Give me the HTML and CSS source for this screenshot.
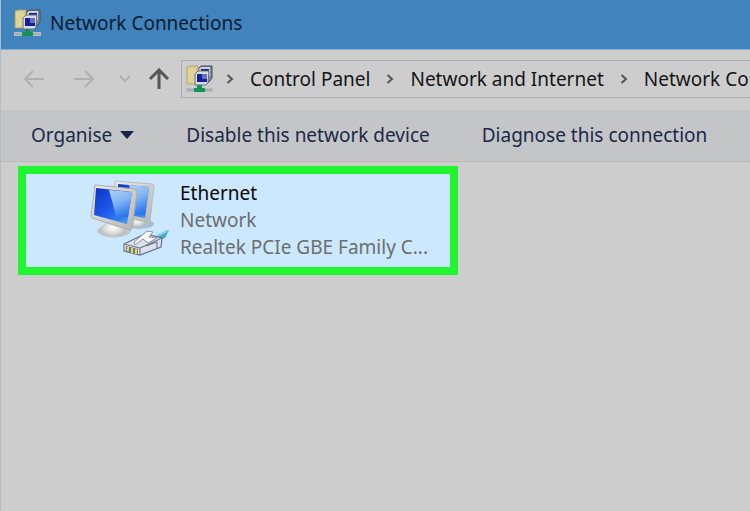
FILE: index.html
```html
<!DOCTYPE html>
<html lang="en-GB">
<head>
<meta charset="utf-8">
<title>Network Connections</title>
<link rel="stylesheet" href="styles.css">
</head>
<body>
<svg class="defs" aria-hidden="true">
  <symbol id="net-folder" viewBox="0 0 28 28">
    <path d="M1 2l3-1h8v18H1z" fill="#d5c98a" stroke="#a99c62" stroke-width=".7"/>
    <path d="M2 3h8v15H2z" fill="#dfd495"/>
    <path d="M13 3l2-2h11v12l-3 4H13z" fill="#85898d" stroke="#424b55"/>
    <path d="M13 4l2-2h9v9H13z" fill="#cdd2df"/>
    <path d="M15 4h8v7h-8z" fill="#16208e"/>
    <path d="M9 9l3-3h11l-1 12-2 2H9z" fill="#d8dbe4" stroke="#687083"/>
    <path d="M11 9h10v8H11z" fill="#172098"/>
    <path d="M16 9h5v5h-5z" fill="#6070bd"/>
    <path d="M0 23h27v4H0z" fill="#b6bec0"/>
    <path d="M1 25h25" stroke="#959da0"/>
    <path d="M11 20h5v3h3v4H8v-4h3z" fill="#159257"/>
  </symbol>
  <symbol id="crumb-arrow" viewBox="0 0 8 10">
    <path d="M1.5 1l4.5 4-4.5 4" fill="none" stroke="#555" stroke-width="2"/>
  </symbol>
</svg>
<div class="window">
  <header class="titlebar">
    <svg class="folder" aria-hidden="true"><use href="#net-folder"/></svg>
    <h1>Network Connections</h1>
  </header>
  <nav class="navbar" aria-label="Navigation">
    <button class="nav" aria-label="Back" disabled><svg width="22" height="20" viewBox="0 0 22 20"><path d="M21 10H2M10 2l-8 8 8 8"/></svg></button>
    <button class="nav forward" aria-label="Forward" disabled><svg width="22" height="20" viewBox="0 0 22 20"><path d="M1 10h19M12 2l8 8-8 8"/></svg></button>
    <button class="nav recent" aria-label="Recent locations" disabled><svg width="12" height="8" viewBox="0 0 12 8"><path d="M1 1l5 5 5-5"/></svg></button>
    <button class="nav up" aria-label="Up"><svg width="20" height="22" viewBox="0 0 20 22"><path d="M10 21V2M1 11l9-9 9 9"/></svg></button>
    <div class="address">
      <svg class="folder" aria-hidden="true"><use href="#net-folder"/></svg>
      <svg class="arrow" aria-hidden="true"><use href="#crumb-arrow"/></svg>
      <a href="#">Control Panel</a>
      <svg class="arrow" aria-hidden="true"><use href="#crumb-arrow"/></svg>
      <a href="#">Network and Internet</a>
      <svg class="arrow" aria-hidden="true"><use href="#crumb-arrow"/></svg>
      <a href="#">Network Connections</a>
    </div>
  </nav>
  <div class="commands">
    <button class="organise">Organise <svg width="14" height="8" viewBox="0 0 14 8" aria-hidden="true"><path d="M0 0h14L7 8z" fill="#14244a"/></svg></button>
    <button>Disable this network device</button>
    <button>Diagnose this connection</button>
  </div>
  <main>
    <button class="adapter">
      <svg width="82" height="80" viewBox="0 0 82 80" aria-hidden="true">
        <defs>
          <linearGradient id="screen" x1="0" y1="0" x2="1" y2="1"><stop stop-color="#0934c4"/><stop offset=".5" stop-color="#1e5ced"/><stop offset="1" stop-color="#42a5fb"/></linearGradient>
          <linearGradient id="glare" x1="0" y1="0" x2=".3" y2="1"><stop stop-color="#b4d4f4"/><stop offset=".5" stop-color="#7fb3f2"/><stop offset="1" stop-color="#2c76ec"/></linearGradient>
          <linearGradient id="bezel" x2="1" y2="1"><stop stop-color="#f0eee9"/><stop offset="1" stop-color="#b4b3b2"/></linearGradient>
          <radialGradient id="base"><stop stop-color="#fff"/><stop offset=".6" stop-color="#ddddda"/><stop offset="1" stop-color="#b9bcbc"/></radialGradient>
        </defs>
        <g transform="translate(-1 -3)">
          <ellipse cx="50" cy="47" rx="15" ry="5" fill="#a9bfd0"/>
          <path d="M43 37l11 3 1 4c5 2 1 6-6 6l-10-3z" fill="url(#base)"/>
          <path d="M26 4l37 3 2 2-4 35-3 1-33-6z" fill="url(#bezel)" stroke="#b6bcc0"/>
          <path d="M29 7l31 3-4 31-26-5z" fill="url(#screen)"/>
          <path d="M40 8l20 2-4 29-10-3z" fill="url(#glare)"/>
          <ellipse cx="25" cy="54" rx="17" ry="6" fill="#b9cbd7"/>
          <path d="M18 41l17 5-2 4c9 4 4 10-8 10-14 0-19-7-10-12 5-2 4-4 3-7z" fill="url(#base)" stroke="#c5c9c9"/>
          <path d="M6 8l40 4 2 3-5 37-3 1L3 41l-1-2z" fill="url(#bezel)" stroke="#aaaead"/>
          <path d="M7 11l36 4-5 32-33-9z" fill="url(#screen)"/>
          <path d="M20 13l23 2-4 25-11 2z" fill="url(#glare)"/>
        </g>
        <g transform="translate(-1 -1)">
          <path d="M63 60l7-5 10-4-4 8-9 4z" fill="#3da9cc"/>
          <path d="M68 57l10-5" stroke="#8bd5e3" stroke-width="2"/>
          <path d="M35 65l21-10 17 4-1 9-21 8-16-4z" fill="#dce1ec" stroke="#65728a" stroke-width="1.2"/>
          <path d="M35 65l16 4 22-10M51 69v7M57 67l11-4v6" fill="none" stroke="#747e91" stroke-width="1.2"/>
          <path d="M45 63l13-11 6 1-4 5 8 1-9 5-5-4-8 6z" fill="#f7f9fc" stroke="#8793a6"/>
          <path d="M37 67l12 3v5l-12-3z" fill="#737b77"/>
          <path d="M39 68v4M43 69v5M47 70v5" stroke="#e1d960" stroke-width="2"/>
        </g>
      </svg>
      <span class="details"><strong>Ethernet</strong><span>Network</span><span>Realtek PCIe GBE Family C...</span></span>
    </button>
  </main>
</div>
</body>
</html>
```
FILE: styles.css
```css
* { box-sizing: border-box; }
body { margin: 0; background: #cdcdcd; color: #151515; font: 19px/28px "Noto Sans", "Open Sans", sans-serif; overflow: hidden; }
button { border: 0; padding: 0; background: none; color: inherit; font: inherit; white-space: nowrap; }
svg { display: block; flex: none; }
.defs { position: absolute; width: 0; height: 0; }
.window { min-height: 100vh; border-left: 1px solid #a9bdd0; }
.titlebar { display: flex; align-items: center; gap: 8px; height: 50px; padding: 0 13px 3px; background: #4184bd; border-bottom: 1px solid #83add3; }
.folder { width: 28px; height: 28px; }
h1 { margin: 0; font-size: inherit; font-weight: 400; color: #0b1b30; }
.navbar { display: flex; align-items: center; height: 60px; padding: 0 0 2px 22px; }
.nav svg { fill: none; stroke: #b0b0b0; stroke-width: 2; }
.forward { margin-left: 28px; }
.recent { margin-left: 24px; }
.nav.up { margin-left: 18px; }
.nav.up svg { stroke: #555; stroke-width: 3; }
.address { display: flex; flex: 1; align-items: center; gap: 16px; min-width: 0; height: 38px; margin-left: 12px; padding-left: 4px; border: 1px solid #adadad; border-right: 0; overflow: hidden; white-space: nowrap; }
.address .folder + .arrow { margin-left: -4px; }
.address a { color: inherit; text-decoration: none; }
.arrow { width: 8px; height: 10px; }
.commands { display: flex; align-items: center; gap: 52px; height: 52px; padding: 0 0 2px 30px; background: #c4c5c7; border-bottom: 1px solid #b9babc; color: #1b294a; }
.organise { display: flex; align-items: center; gap: 8px; }
main { padding: 4px 17px; }
.adapter { display: flex; width: 440px; max-width: 100%; padding: 6px 16px 6px 64px; border: 8px solid #20f52f; background: #cce8ff; text-align: left; }
.details { display: flex; flex-direction: column; min-width: 0; margin-left: 8px; color: #6d6d6d; line-height: 27px; }
.details strong { color: #080808; font-weight: 400; }
```
